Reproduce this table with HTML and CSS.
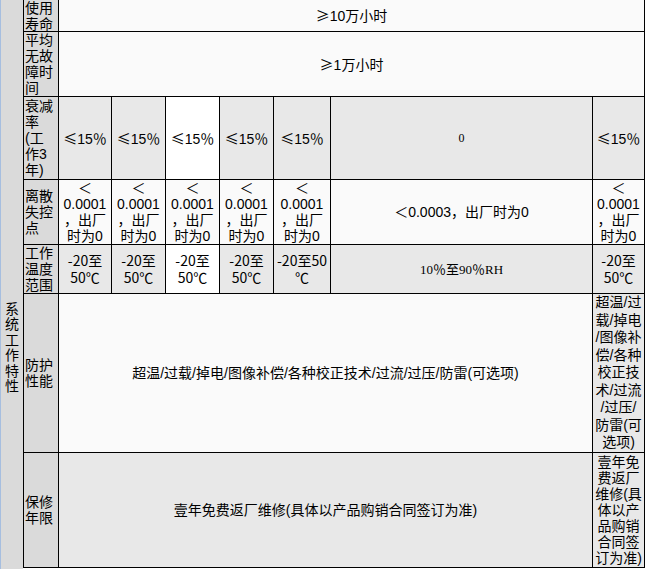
FILE: index.html
```html
<!DOCTYPE html>
<html lang="zh-CN">
<head>
<meta charset="utf-8">
<title>系统工作特性</title>
<link rel="stylesheet" href="styles.css">
</head>
<body>
<div class="page">
  <div class="side"><span class="side-text">系统工作特性</span></div>
  <div class="spec">
    <div class="c lbl"><p class="t">使用<br>寿命</p></div>
    <div class="c span7 off"><p class="t"><span class="cj">≥</span>10万小时</p></div>

    <div class="c lbl"><p class="t">平均<br>无故<br>障时<br>间</p></div>
    <div class="c span7 off"><p class="t"><span class="cj">≥</span>1万小时</p></div>

    <div class="c lbl"><p class="t">衰减<br>率<br>(工<br>作3<br>年)</p></div>
    <div class="c gray"><p class="t"><span class="cj">≤</span>15<span class="cj">％</span></p></div>
    <div class="c gray"><p class="t"><span class="cj">≤</span>15<span class="cj">％</span></p></div>
    <div class="c white"><p class="t"><span class="cj">≤</span>15<span class="cj">％</span></p></div>
    <div class="c gray"><p class="t"><span class="cj">≤</span>15<span class="cj">％</span></p></div>
    <div class="c gray"><p class="t"><span class="cj">≤</span>15<span class="cj">％</span></p></div>
    <div class="c gray zero"><p class="t">0</p></div>
    <div class="c gray"><p class="t"><span class="cj">≤</span>15<span class="cj">％</span></p></div>

    <div class="c lbl"><p class="t">离散<br>失控<br>点</p></div>
    <div class="c off"><p class="t">＜<br>0.0001<br>，出厂<br>时为0</p></div>
    <div class="c off"><p class="t">＜<br>0.0001<br>，出厂<br>时为0</p></div>
    <div class="c off"><p class="t">＜<br>0.0001<br>，出厂<br>时为0</p></div>
    <div class="c off"><p class="t">＜<br>0.0001<br>，出厂<br>时为0</p></div>
    <div class="c off"><p class="t">＜<br>0.0001<br>，出厂<br>时为0</p></div>
    <div class="c off"><p class="t">＜0.0003，出厂时为0</p></div>
    <div class="c off"><p class="t">＜<br>0.0001<br>，出厂<br>时为0</p></div>

    <div class="c lbl"><p class="t">工作<br>温度<br>范围</p></div>
    <div class="c gray temp"><p class="t">-20至<br>50℃</p></div>
    <div class="c gray temp"><p class="t">-20至<br>50℃</p></div>
    <div class="c white temp"><p class="t">-20至<br>50℃</p></div>
    <div class="c gray temp"><p class="t">-20至<br>50℃</p></div>
    <div class="c gray temp"><p class="t">-20至50<br>℃</p></div>
    <div class="c gray rh"><p class="t">10<span class="cj">％</span>至90<span class="cj">％</span>RH</p></div>
    <div class="c gray temp"><p class="t">-20至<br>50℃</p></div>

    <div class="c lbl"><p class="t">防护<br>性能</p></div>
    <div class="c span6 off"><p class="t">超温/过载/掉电/图像补偿/各种校正技术/过流/过压/防雷(可选项)</p></div>
    <div class="c gray tall"><p class="t">超温/过<br>载/掉电<br>/图像补<br>偿/各种<br>校正技<br>术/过流<br>/过压/<br>防雷(可<br>选项)</p></div>

    <div class="c lbl"><p class="t">保修<br>年限</p></div>
    <div class="c span6 gray"><p class="t">壹年免费返厂维修(具体以产品购销合同签订为准)</p></div>
    <div class="c gray"><p class="t">壹年免<br>费返厂<br>维修(具<br>体以产<br>品购销<br>合同签<br>订为准)</p></div>
  </div>
</div>
</body>
</html>
```

FILE: styles.css
```css
html, body {
  margin: 0;
  padding: 0;
  background: #ffffff;
}

body {
  font-family: "Liberation Sans", "Noto Sans CJK SC", sans-serif;
  font-size: 14px;
  line-height: 16px;
  color: #000;
}

.page {
  display: flex;
  align-items: stretch;
  min-height: 569px;
}

.side {
  width: 23px;
  flex: none;
  background: #dadada;
  border-left: 1px solid #a6bedf;
  display: flex;
  justify-content: center;
  align-items: flex-start;
  padding-top: 302px;
  box-sizing: border-box;
}

.side-text {
  width: 14px;
  line-height: 15.4px;
  text-align: center;
  word-break: break-all;
}

.spec {
  flex: none;
  align-self: flex-start;
  display: grid;
  grid-template-columns: 35px 53px 54px 54px 54px 57px 262px 52px;
  grid-template-rows: 32px 65px 83px 65px 49px 159px 115px;
  border-left: 1px solid #000;
}

.c {
  box-sizing: border-box;
  border-right: 1px solid #000;
  border-bottom: 1px solid #000;
  display: flex;
  align-items: center;
  justify-content: center;
  text-align: center;
  overflow: hidden;
}

.t {
  margin: 0;
  white-space: nowrap;
}

.cj {
  font-family: "Noto Sans CJK SC", sans-serif;
}

.temp .t {
  font-family: "Noto Sans CJK SC", sans-serif;
  line-height: 17px;
}

.lbl {
  background: #dadada;
  justify-content: flex-start;
  text-align: left;
  padding-left: 1px;
}

.span7 { grid-column: span 7; }
.span6 { grid-column: span 6; }

.gray { background: #e8e8e8; }
.off { background: #fafafa; }
.white { background: #ffffff; }

.zero {
  font-family: "Liberation Serif", serif;
  font-size: 12px;
}

.rh {
  font-family: "Liberation Serif", "Noto Sans CJK SC", serif;
  font-size: 13px;
}

.tall { line-height: 17.5px; }
```
